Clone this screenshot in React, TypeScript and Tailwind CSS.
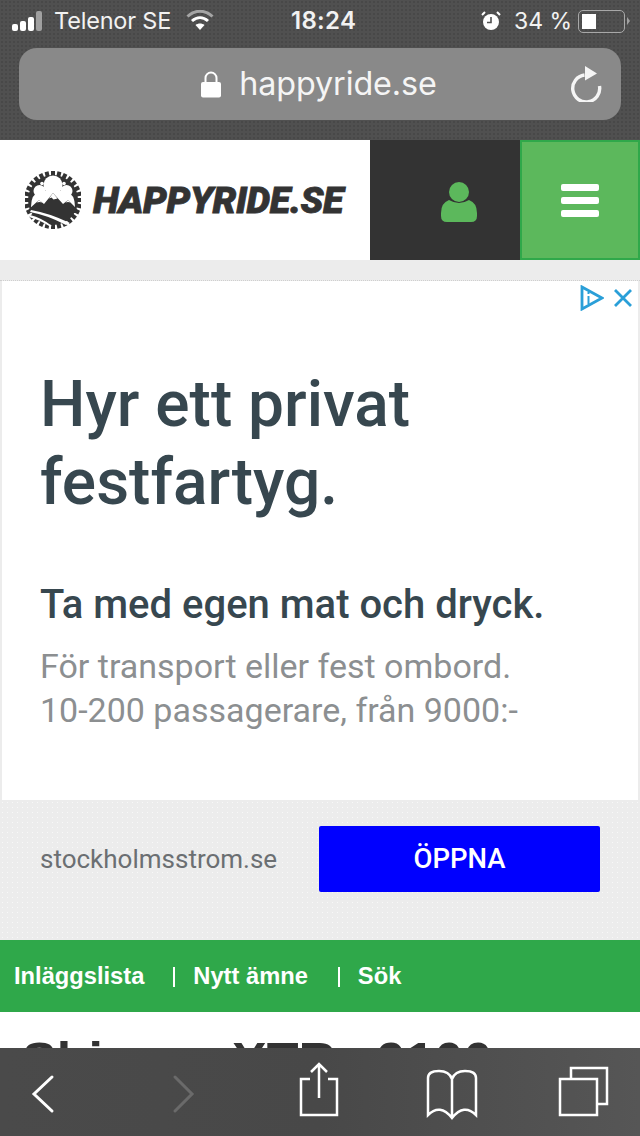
import React from 'react';

function GearLogo() {
  const teeth = Array.from({ length: 28 }, (_, i) => (i * 360) / 28);
  return (
    <svg width="56" height="60" viewBox="0 0 56 60" className="shrink-0">
      <g fill="#333333">
        {teeth.map(a => (
          <rect key={a} x="26" y="1" width="4" height="5" transform={`rotate(${a} 28 30)`} />
        ))}
        <circle cx="28" cy="30" r="25" />
      </g>
      {/* clouds */}
      <g fill="#ffffff">
        <circle cx="28" cy="15" r="9.5" />
        <circle cx="14.5" cy="21" r="6" />
        <circle cx="41.5" cy="21" r="6" />
        <path d="M6 37 Q6 24 15 21 L41 21 Q50 24 50 37 Z" />
      </g>
      <circle cx="17" cy="13.5" r="1.8" fill="#ffffff" />
      <circle cx="39" cy="13.5" r="1.8" fill="#ffffff" />
      {/* mountains */}
      <path d="M4 39 L14 30 L19 34 L28 23 L38 34 L43 30 L52 39 L52 43 L4 43 Z" fill="#333333" />
      <path d="M28 23 L24 28.5 L26.5 27.5 L28.5 29.5 L32.5 28.5 Z M14 30 L11.5 32.5 L14.5 32 L17 32.5 Z M43 30 L40.5 32.5 L43 32 L45.5 32.5 Z" fill="#ffffff" />
      {/* road */}
      <path d="M6 40 Q24 43 45 53 L41 55 Q22 45 5 42 Z" fill="#ffffff" />
      <path d="M5 45 Q17 48 27 56 L25 56.5 Q15 50 4 47 Z" fill="#ffffff" />
    </svg>
  );
}

function StatusBar() {
  return (
    <div className="flex h-[42px] items-center pl-[12px] text-[23.5px] text-[#f2f2f2] font-['Inter',sans-serif]">
      <div className="flex items-end gap-[2px] w-[42px] h-[20px]">
        <div className="w-[6px] h-[7px] rounded-[2px] bg-white" />
        <div className="w-[6px] h-[10px] rounded-[2px] bg-white" />
        <div className="w-[6px] h-[14px] rounded-[2px] bg-white" />
        <div className="w-[6px] h-[20px] rounded-[2px] bg-[#a0a0a0]" />
      </div>
      <span className="tracking-[-0.2px] w-[132px] whitespace-nowrap">Telenor SE</span>
      <svg width="28" height="22" viewBox="0 0 28 22">
        <path d="M1.5 6.5 C9 -0.5 19 -0.5 26.5 6.5" fill="none" stroke="#a5a5a5" strokeWidth="3" />
        <path d="M6 11 C11 6.5 17 6.5 22 11" fill="none" stroke="#ffffff" strokeWidth="3" />
        <path d="M14 20 L9.5 15 C12 13 16 13 18.5 15 Z" fill="#ffffff" />
      </svg>
      <span className="ml-[77px] w-[190px] font-semibold text-[24px] tracking-[0.3px] whitespace-nowrap">18:24</span>
      <svg width="20" height="20" viewBox="0 0 20 20">
        <circle cx="10" cy="11" r="8" fill="#ffffff" />
        <path d="M10 6 V11.5 H6" fill="none" stroke="#505050" strokeWidth="1.6" />
        <path d="M1 4 L4 1 M19 4 L16 1" stroke="#ffffff" strokeWidth="2" />
      </svg>
      <span className="ml-[13px] w-[64px] text-[23px] whitespace-nowrap">34 %</span>
      <div className="flex items-center">
        <div className="w-[47px] h-[23px] rounded-[5px] border border-[#a8a8a8] p-[3px]">
          <div className="h-full w-[14px] bg-white" />
        </div>
        <div className="ml-[2px] w-0 h-0 border-y-[4px] border-y-transparent border-l-[3px] border-l-[#a0a0a0]" />
      </div>
    </div>
  );
}

function UrlBar() {
  return (
    <div className="mx-[19px] mt-[6px] h-[72px] rounded-[18px] bg-[#898989] flex items-center relative justify-center">
      <div className="flex items-center gap-[18px] pr-[2px]">
        <svg width="20" height="28" viewBox="0 0 20 28">
          <path d="M4.5 13 V8 a5.5 5.5 0 0 1 11 0 V13" fill="none" stroke="#ffffff" strokeWidth="2" />
          <rect x="0" y="12" width="20" height="15.5" rx="2" fill="#ffffff" />
        </svg>
        <span className="text-[32.3px] pt-[1px] text-[#f5f5f5] font-['Inter',sans-serif] tracking-[-0.1px]">happyride.se</span>
      </div>
      <svg width="32" height="36" viewBox="0 0 32 36" className="absolute right-[19px] top-[18px]">
        <path d="M14.5 9 A13.5 13.5 0 1 0 29.5 20" fill="none" stroke="#f5f5f5" strokeWidth="3.4" />
        <path d="M15 0 L27 7.5 L15 14.5 Z" fill="#f5f5f5" />
      </svg>
    </div>
  );
}

function SiteHeader() {
  return (
    <div className="flex h-[120px]">
      <div className="w-[370px] bg-white flex items-center pl-[25px]">
        <GearLogo />
        <span className="ml-[12px] mt-[2px] text-[37.7px] leading-none font-black italic text-[#333333] font-['Roboto',sans-serif] tracking-[-0.4px] whitespace-nowrap [-webkit-text-stroke:0.8px_#333333]">HAPPYRIDE.SE</span>
      </div>
      <div className="w-[150px] bg-[#333333] flex items-center justify-center">
        <svg width="36" height="40" viewBox="0 0 36 40" className="ml-[28px] mt-[4px]">
          <circle cx="18" cy="10" r="10" fill="#5cb85c" />
          <path d="M8 18 Q18 24 28 18 Q36 21 36 31 V34 Q36 40 30 40 H6 Q0 40 0 34 V31 Q0 21 8 18 Z" fill="#5cb85c" />
        </svg>
      </div>
      <div className="flex-1 bg-[#5cb85c] border-2 border-[#2fa84a] flex flex-col items-center justify-center gap-[6px]">
        <div className="w-[38px] h-[7px] rounded-[2px] bg-white" />
        <div className="w-[38px] h-[7px] rounded-[2px] bg-white" />
        <div className="w-[38px] h-[7px] rounded-[2px] bg-white" />
      </div>
    </div>
  );
}

function AdChoices() {
  return (
    <div className="absolute top-[4px] right-[5px] flex items-center gap-[9px]">
      <svg width="24" height="26" viewBox="0 0 24 26">
        <path d="M2 2 L22 13 L2 24 Z" fill="none" stroke="#2a9fd8" strokeWidth="2.8" />
        <path d="M8.5 11 V19" stroke="#2a9fd8" strokeWidth="2" />
        <path d="M8.5 7 V9" stroke="#2a9fd8" strokeWidth="2" />
      </svg>
      <svg width="20" height="20" viewBox="0 0 20 20">
        <path d="M2 2 L18 18 M18 2 L2 18" stroke="#2a9fd8" strokeWidth="2.8" />
      </svg>
    </div>
  );
}

function Ad() {
  return (
    <div className="mt-[20px] h-[660px] border-t border-dotted border-[#cfcfcf] font-['Roboto',sans-serif]">
      <div className="relative mx-[2px] h-[519px] bg-white pl-[38px] pt-[85px]">
        <AdChoices />
        <h2 className="text-[64px] leading-[78px] font-medium text-[#37474f]">
          Hyr ett privat<br />festfartyg.
        </h2>
        <p className="mt-[59px] text-[40px] leading-[48px] font-medium text-[#37474f] whitespace-nowrap">Ta med egen mat och dryck.</p>
        <p className="mt-[15px] text-[34px] leading-[44px] text-[#8c8f91] whitespace-nowrap">
          För transport eller fest ombord.<br />10-200 passagerare, från 9000:-
        </p>
      </div>
      <div className="flex items-start pl-[40px] pt-[26px] h-[140px] bg-[radial-gradient(#f8f8f8_0.7px,transparent_0.8px)] bg-[length:5px_5px]">
        <span className="w-[279px] h-[66px] flex items-center text-[26px] text-[#6b6f72]">stockholmsstrom.se</span>
        <button className="w-[281px] h-[66px] bg-[#0000ff] rounded-[2px] text-white text-[27.5px] font-medium">ÖPPNA</button>
      </div>
    </div>
  );
}

function NavBar() {
  return (
    <div className="h-[72px] bg-[#2fa84a] flex items-center pl-[14px] pt-[2px] text-white text-[23.7px] font-bold font-['Liberation_Sans',sans-serif]">
      <span>Inläggslista</span>
      <span className="ml-[29px] mr-[18px] w-[2px] h-[20px] bg-white" />
      <span>Nytt ämne</span>
      <span className="ml-[30px] mr-[18px] w-[2px] h-[20px] bg-white" />
      <span>Sök</span>
    </div>
  );
}

function BottomBar() {
  return (
    <div className="h-[88px] shrink-0 bg-gradient-to-r from-[#4a4a4a] via-[#484848] to-[#565656]">
      <svg width="640" height="88" viewBox="0 0 640 88" fill="none" stroke="#ffffff" strokeWidth="2.5">
        <path d="M52 29 L34 46 L52 63" strokeWidth="3" strokeLinecap="round" />
        <path d="M175 29 L192 46 L175 63" stroke="#6a6a6a" strokeWidth="3" strokeLinecap="round" />
        <path d="M310 31 H301 V67 H337 V31 H328" />
        <path d="M319 50 V17 M311 24 L319 16 L327 24" />
        <path d="M428 67 V30 Q428 23 439 23 Q449 23 452 31 Q455 23 465 23 Q476 23 476 30 V67 Q464 55 452 70 Q440 55 428 67 Z M452 31 V68" />
        <path d="M571 30 V20 H607 V56 H598" />
        <rect x="560" y="31" width="37" height="36" />
      </svg>
    </div>
  );
}

export default function App() {
  return (
    <div className="w-[640px] h-[1136px] flex flex-col overflow-hidden bg-[#ececec]">
      <div className="h-[140px] shrink-0 bg-[#505050] bg-[radial-gradient(#474747_0.7px,transparent_0.8px)] bg-[length:4px_4px]">
        <StatusBar />
        <UrlBar />
      </div>
      <div className="flex-1 overflow-hidden">
        <SiteHeader />
        <Ad />
        <NavBar />
        <div className="bg-white h-[200px] pl-[22px] pt-[21px]">
          <h1 className="text-[52px] leading-[56px] font-bold text-[#333333] font-['Liberation_Sans',sans-serif] whitespace-nowrap">
            Shi<span className="tracking-[-6px]">mano</span> XTR <span className="tracking-[-20px]">m</span>9100
          </h1>
        </div>
      </div>
      <BottomBar />
    </div>
  );
}
